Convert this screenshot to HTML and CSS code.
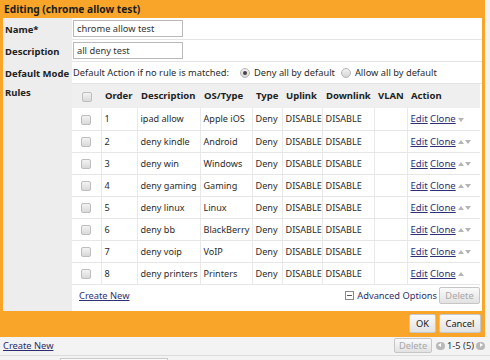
FILE: index.html
```html
<!DOCTYPE html>
<html>
<head>
<meta charset="utf-8">
<link rel="stylesheet" href="styles.css">
</head>
<body>
<div class="dialog">
  <div class="dlg-title">Editing (chrome allow test)</div>
  <div class="dlg-body">
    <div class="lbl">Name*</div>
    <div class="fld"><span class="input">chrome allow test</span></div>
    <div class="lbl">Description</div>
    <div class="fld"><span class="input">all deny test</span></div>
    <div class="lbl">Default Mode</div>
    <div class="fld mode">
      <span>Default Action if no rule is matched:</span>
      <span class="radio on"></span><span>Deny all by default</span>
      <span class="radio"></span><span>Allow all by default</span>
    </div>
    <div class="lbl rules-lbl">Rules</div>
    <div class="fld rules">
      <table class="grid">
        <colgroup>
          <col class="c-cb"><col class="c-ord"><col class="c-desc"><col class="c-os"><col class="c-type"><col class="c-up"><col class="c-down"><col class="c-vlan"><col class="c-act">
        </colgroup>
        <thead>
          <tr><th class="cbc"><span class="cb"></span></th><th>Order</th><th>Description</th><th>OS/Type</th><th>Type</th><th>Uplink</th><th>Downlink</th><th>VLAN</th><th>Action</th></tr>
        </thead>
        <tbody>
          <tr><td class="cbc"><span class="cb"></span></td><td>1</td><td>ipad allow</td><td>Apple iOS</td><td>Deny</td><td>DISABLE</td><td>DISABLE</td><td></td><td><a>Edit</a> <a>Clone</a><span class="arr"><i class="dn"></i></span></td></tr>
          <tr><td class="cbc"><span class="cb"></span></td><td>2</td><td>deny kindle</td><td>Android</td><td>Deny</td><td>DISABLE</td><td>DISABLE</td><td></td><td><a>Edit</a> <a>Clone</a><span class="arr"><i class="up"></i><i class="dn"></i></span></td></tr>
          <tr><td class="cbc"><span class="cb"></span></td><td>3</td><td>deny win</td><td>Windows</td><td>Deny</td><td>DISABLE</td><td>DISABLE</td><td></td><td><a>Edit</a> <a>Clone</a><span class="arr"><i class="up"></i><i class="dn"></i></span></td></tr>
          <tr><td class="cbc"><span class="cb"></span></td><td>4</td><td>deny gaming</td><td>Gaming</td><td>Deny</td><td>DISABLE</td><td>DISABLE</td><td></td><td><a>Edit</a> <a>Clone</a><span class="arr"><i class="up"></i><i class="dn"></i></span></td></tr>
          <tr><td class="cbc"><span class="cb"></span></td><td>5</td><td>deny linux</td><td>Linux</td><td>Deny</td><td>DISABLE</td><td>DISABLE</td><td></td><td><a>Edit</a> <a>Clone</a><span class="arr"><i class="up"></i><i class="dn"></i></span></td></tr>
          <tr><td class="cbc"><span class="cb"></span></td><td>6</td><td>deny bb</td><td>BlackBerry</td><td>Deny</td><td>DISABLE</td><td>DISABLE</td><td></td><td><a>Edit</a> <a>Clone</a><span class="arr"><i class="up"></i><i class="dn"></i></span></td></tr>
          <tr><td class="cbc"><span class="cb"></span></td><td>7</td><td>deny voip</td><td>VoIP</td><td>Deny</td><td>DISABLE</td><td>DISABLE</td><td></td><td><a>Edit</a> <a>Clone</a><span class="arr"><i class="up"></i><i class="dn"></i></span></td></tr>
          <tr><td class="cbc"><span class="cb"></span></td><td>8</td><td>deny printers</td><td>Printers</td><td>Deny</td><td>DISABLE</td><td>DISABLE</td><td></td><td><a>Edit</a> <a>Clone</a><span class="arr"><i class="up"></i></span></td></tr>
        </tbody>
      </table>
      <div class="tbl-foot">
        <a class="create">Create New</a>
        <div class="adv">
          <span class="minus-box"></span><span class="adv-txt">Advanced Options</span>
          <span class="btn disabled">Delete</span>
        </div>
      </div>
    </div>
  </div>
  <div class="dlg-footer">
    <span class="btn ok">OK</span>
    <span class="btn cancel">Cancel</span>
  </div>
</div>
<div class="page-bar">
  <a class="create page-create">Create New</a>
  <div class="pager">
    <span class="btn disabled">Delete</span>
    <span class="pg-arrow left"></span>
    <span class="pg-txt">1-5 (5)</span>
    <span class="pg-arrow right"></span>
  </div>
</div>
<div class="page-next">
  <span class="next-box"></span>
</div>
</body>
</html>
```
FILE: styles.css
```css
* { box-sizing: border-box; }
body {
  margin: 0;
  background: #f3f3f3;
  font-family: "Noto Sans", "DejaVu Sans", sans-serif;
  font-size: 9.3px;
  color: #2b2b2b;
  width: 490px;
  height: 360px;
  overflow: hidden;
}
.dialog {
  width: 485px;
  border-left: 3px solid #f8a52a;
  border-right: 3px solid #f8a52a;
  background: #fff;
}
.dlg-title {
  height: 18px;
  margin-left: -3px;
  margin-right: -3px;
  padding: 2px 0 0 4px;
  background: #f8a52a;
  font-weight: bold;
  font-size: 10.2px;
  color: #1c1c1c;
}
.dlg-body {
  display: grid;
  grid-template-columns: 69px 1fr;
}
.lbl {
  background: #ededed;
  font-weight: bold;
  font-size: 9.5px;
  padding-left: 2px;
  display: flex;
  align-items: center;
  height: 22px;
  color: #222;
}
.fld {
  height: 22px;
  border-bottom: 1px solid #e4e4e4;
  display: flex;
  align-items: center;
  padding-left: 1px;
}
.input {
  display: block;
  width: 110px;
  height: 17px;
  border: 1px solid #b9b9b9;
  padding: 1px 3px 0;
  color: #333;
  background: #fff;
}
.mode { gap: 4px; }
.mode span:first-child { margin-right: 5px; }
.radio {
  width: 10px;
  height: 10px;
  border-radius: 50%;
  border: 1px solid #b5b5b5;
  background: linear-gradient(#f2f2f2, #d6d6d6);
  position: relative;
  margin-left: 2px;
}
.radio.on::after {
  content: "";
  position: absolute;
  left: 2px; top: 2px;
  width: 4px; height: 4px;
  border-radius: 50%;
  background: #444;
}
.rules-lbl {
  align-items: flex-start;
  padding-top: 2px;
  height: auto;
}
.rules {
  height: auto;
  display: block;
  border-bottom: none;
  padding: 0 2px 4px 0;
}
.grid {
  width: 408px;
  border-collapse: collapse;
  table-layout: fixed;
}
.c-cb { width: 29px; }
.c-ord { width: 36px; }
.c-desc { width: 63px; }
.c-os { width: 52px; }
.c-type { width: 30px; }
.c-up { width: 40px; }
.c-down { width: 52px; }
.c-vlan { width: 33px; }
.c-act { width: 73px; }
.grid th {
  background: #efefef;
  height: 24px;
  text-align: left;
  font-weight: bold;
  font-size: 9.5px;
  padding: 0 0 2px 4px;
  color: #222;
  white-space: nowrap;
}
.grid td {
  height: 22px;
  padding: 0 0 0 3px;
  font-size: 9.1px;
  border-bottom: 1px solid #e6e6e6;
  border-left: 1px solid #e9e9e9;
  white-space: nowrap;
  overflow: visible;
}
.grid td:first-child { border-left: none; }
.grid .cbc { text-align: center; padding: 0; }
.cb {
  display: inline-block;
  width: 10px;
  height: 10px;
  border: 1px solid #bdbdbd;
  border-radius: 2px;
  background: linear-gradient(#f3f3f3, #d9d9d9);
  vertical-align: middle;
}
a {
  color: #2f2f75;
  text-decoration: underline;
}
.grid a { font-size: 9.6px; }
.arr {
  display: inline-flex;
  gap: 1px;
  margin-left: 2px;
  vertical-align: middle;
}
.arr i {
  display: block;
  width: 0; height: 0;
  border-left: 3.5px solid transparent;
  border-right: 3.5px solid transparent;
}
.arr .up { border-bottom: 4px solid #b5b5b5; }
.arr .dn { border-top: 4px solid #b5b5b5; }
.tbl-foot {
  height: 22px;
  display: flex;
  align-items: center;
  justify-content: space-between;
  padding-left: 7px;
}
.adv {
  display: flex;
  align-items: center;
}
.minus-box {
  width: 9px;
  height: 9px;
  border: 1px solid #8a8a8a;
  position: relative;
  margin-right: 3px;
  background: #fff;
}
.minus-box::after {
  content: "";
  position: absolute;
  left: 1px; right: 1px; top: 3px;
  height: 1px;
  background: #555;
}
.adv-txt { color: #2d3068; margin-right: 2px; }
.btn {
  display: inline-flex;
  align-items: center;
  justify-content: center;
  height: 17px;
  padding: 0 4px;
  border: 1px solid #c6c6c6;
  border-radius: 2px;
  background: linear-gradient(#fafafa, #e2e2e2);
  color: #222;
}
.btn.disabled { color: #a8a8a8; width: 41px; }
.dlg-footer {
  height: 26px;
  margin: 0 -3px;
  background: #f8a52a;
  display: flex;
  justify-content: flex-end;
  align-items: center;
  gap: 3px;
  padding-right: 4px;
}
.btn.ok { width: 27px; height: 19px; }
.btn.cancel { width: 42px; height: 19px; }
.page-bar {
  height: 19px;
  display: flex;
  align-items: center;
  justify-content: space-between;
  padding: 0 5px 0 3px;
  border-bottom: 1px solid #dcdcdc;
}
.page-create { color: #2a2c6c; }
.pager {
  display: flex;
  align-items: center;
  gap: 2px;
}
.pager .btn { height: 15px; width: 38px; margin-right: 2px; }
.pg-arrow {
  width: 9px;
  height: 8px;
  border-radius: 4px;
  background: #b8b8b8;
  position: relative;
}
.pg-arrow::after {
  content: "";
  position: absolute;
  top: 1.5px;
  border-top: 2.5px solid transparent;
  border-bottom: 2.5px solid transparent;
}
.pg-arrow.left::after { left: 2px; border-right: 3px solid #fff; }
.pg-arrow.right::after { right: 2px; border-left: 3px solid #fff; }
.pg-txt { color: #333; }
.page-next {
  padding: 2px 0 0 60px;
}
.next-box {
  display: block;
  width: 108px;
  height: 10px;
  border: 1px solid #c9c9c9;
  background: #fafafa;
}
```
